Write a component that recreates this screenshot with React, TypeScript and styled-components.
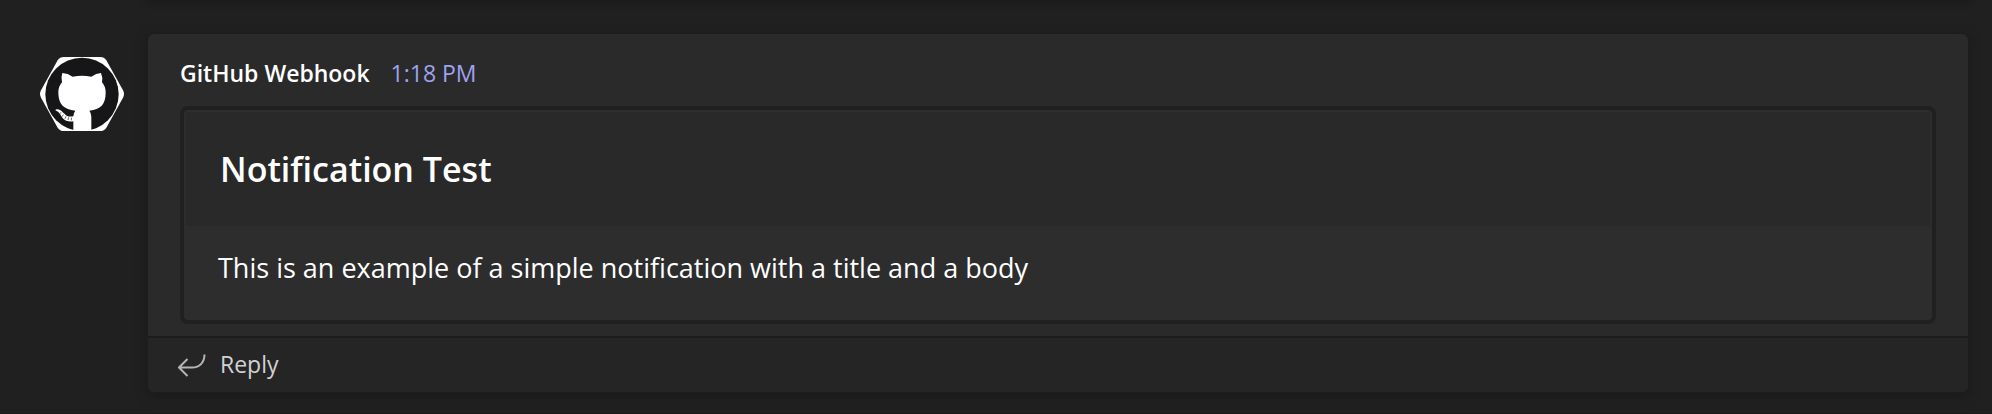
import React from "react";
import styled, { createGlobalStyle } from "styled-components";

const GlobalStyle = createGlobalStyle`
  *, *::before, *::after { box-sizing: border-box; }
  body {
    margin: 0;
    background: #202020;
    color: #ffffff;
    font-family: "Open Sans", "Noto Sans", sans-serif;
  }
`;

const Feed = styled.main`
  display: flex;
  flex-direction: column;
  gap: 34px;
  min-height: 100vh;
  padding-right: 24px;
  border-bottom: 1px solid #1c1b1b;
  overflow: hidden;
`;

const PreviousCardEdge = styled.div`
  height: 0;
  margin-left: 148px;
  box-shadow: 0 0 6px 2px #181818;
`;

const Message = styled.article`
  display: flex;
  align-items: flex-start;
`;

const AvatarSlot = styled.div`
  flex: none;
  width: 148px;
  padding: 23px 0 0 40px;
`;

const AvatarImage = styled.svg`
  display: block;
  width: 84px;
  height: 74px;
`;

const Card = styled.div`
  flex: 1;
  min-width: 0;
  border-radius: 6px;
  background: #2a2a2a;
  box-shadow: 0 0 0 1px #1d1d1d, 0 3px 12px #181818;
`;

const CardContent = styled.div`
  padding: 23px 32px 12px;
`;

const Meta = styled.header`
  display: flex;
  align-items: center;
  gap: 21px;
  margin-bottom: 17px;
  font-size: 23px;
  line-height: 32px;
`;

const Sender = styled.strong`
  font-weight: 600;
`;

const Time = styled.time`
  color: #9ea2ef;
`;

const Attachment = styled.section`
  border: 4px solid #202020;
  border-radius: 8px;
  background: #2d2d2d;
`;

const AttachmentHead = styled.div`
  margin: 2px 2px 0;
  padding: 34px;
  background: #292929;
`;

const Title = styled.h2`
  margin: 0;
  font-size: 34px;
  font-weight: 600;
  line-height: 46px;
`;

const Body = styled.p`
  margin: 0;
  padding: 22px 34px 32px;
  font-size: 27px;
  line-height: 40px;
`;

const ReplyButton = styled.button`
  display: flex;
  align-items: center;
  gap: 14px;
  width: 100%;
  height: 56px;
  padding: 0 30px;
  border: 0;
  border-top: 2px solid #1c1c1c;
  border-radius: 0 0 6px 6px;
  background: #252525;
  color: #d2d2d2;
  font: inherit;
  font-size: 23px;
  line-height: 32px;
  text-align: left;
  cursor: pointer;
`;

const ReplyLabel = styled.span`
  padding-bottom: 2px;
`;

const ReplyIcon = styled.svg`
  width: 28px;
  height: 24px;
  fill: none;
  stroke: #b4b4b0;
`;

function Avatar() {
  return (
    <AvatarImage viewBox="60 51 252 222" role="img" aria-label="GitHub">
      <path
        fill="#fff"
        d="M131 51H241Q252 51 259 61L309 151Q315 162 309 173L259 263Q252 273 241 273H131Q120 273 113 263L63 173Q57 162 63 151L113 61Q120 51 131 51Z"
      />
      <circle cx="186" cy="163" r="110" fill="#161517" />
      <path
        fill="#fff"
        d="M127 99Q144 100 158 110Q186 105 214 110Q228 100 243 99Q249 113 246 127Q257 139 257 158C257 193 242 208 208 212Q214 219 214 230V273H160V244C136 247 128 236 122 225Q116 214 106 211Q107 206 114 208C125 210 131 221 140 227Q149 231 160 229Q160 219 166 212C132 208 115 193 115 158Q115 139 126 127Q122 112 127 99Z"
      />
      <path
        stroke="#161517"
        strokeWidth="2"
        d="M123 217l-4 5M130 224l-4 6M138 229l-3 7M146 232l-2 8M154 233v8"
      />
    </AvatarImage>
  );
}

export default function App() {
  return (
    <>
      <GlobalStyle />
      <Feed>
        <PreviousCardEdge />
        <Message>
          <AvatarSlot>
            <Avatar />
          </AvatarSlot>
          <Card>
            <CardContent>
              <Meta>
                <Sender>GitHub Webhook</Sender>
                <Time dateTime="13:18">1:18 PM</Time>
              </Meta>
              <Attachment>
                <AttachmentHead>
                  <Title>Notification Test</Title>
                </AttachmentHead>
                <Body>
                  This is an example of a simple notification with a title and a body
                </Body>
              </Attachment>
            </CardContent>
            <ReplyButton type="button">
              <ReplyIcon viewBox="0 0 28 24" strokeWidth="2" aria-hidden="true">
                <path d="M26.5 1.5C26.5 9 22 14.5 14 14.5H1M9.5 6L1 14.5L9.5 23" />
              </ReplyIcon>
              <ReplyLabel>Reply</ReplyLabel>
            </ReplyButton>
          </Card>
        </Message>
      </Feed>
    </>
  );
}
